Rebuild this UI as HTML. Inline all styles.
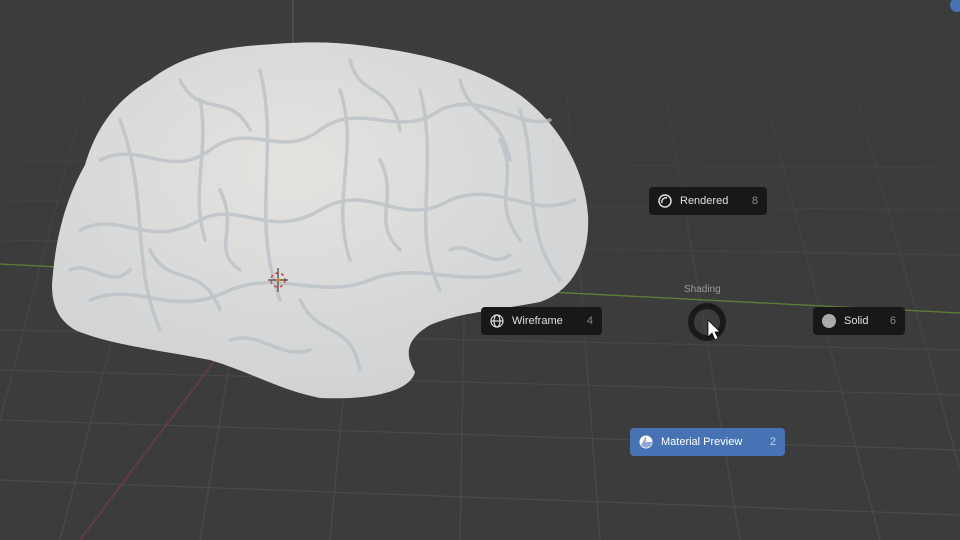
<!DOCTYPE html><html><head><style>
body{margin:0;width:960px;height:540px;overflow:hidden;background:#3c3c3c;font-family:"Liberation Sans",sans-serif}
.b{position:absolute;height:28px;background:#181818;border-radius:4px;color:#e0e0e0;font-size:11px;display:flex;align-items:center;box-sizing:border-box;padding:0 9px}
.b .k{margin-left:auto;color:#888}
.b svg{margin-right:8px}
</style></head><body>
<svg width="960" height="540" style="position:absolute;left:0;top:0">
<defs>
<linearGradient id="gf" x1="0" y1="0" x2="0" y2="1"><stop offset="0" stop-color="#fff" stop-opacity=".1"/><stop offset="1" stop-color="#fff" stop-opacity="1"/></linearGradient>
<mask id="m"><rect width="960" height="540" fill="url(#gf)"/></mask>
<radialGradient id="br" cx=".45" cy=".35" r=".7"><stop offset="0" stop-color="#e4e3e0"/><stop offset="1" stop-color="#cfd1d3"/></radialGradient>
</defs>
<g stroke="#4c4c4c" stroke-width="1.2" fill="none" mask="url(#m)">
<line x1="0" y1="330" x2="960" y2="350"/><line x1="0" y1="370" x2="960" y2="395"/><line x1="0" y1="420" x2="960" y2="450"/><line x1="0" y1="480" x2="960" y2="515"/>
<line x1="0" y1="240" x2="960" y2="255"/><line x1="0" y1="200" x2="960" y2="210"/><line x1="0" y1="160" x2="960" y2="168"/>
<line x1="380" y1="0" x2="330" y2="540"/><line x1="470" y1="0" x2="460" y2="540"/><line x1="560" y1="0" x2="600" y2="540"/><line x1="650" y1="0" x2="740" y2="540"/><line x1="740" y1="0" x2="880" y2="540"/><line x1="830" y1="0" x2="960" y2="470"/><line x1="200" y1="0" x2="60" y2="540"/><line x1="110" y1="0" x2="0" y2="420"/><line x1="290" y1="0" x2="200" y2="540"/>
</g>
<line x1="0" y1="264" x2="960" y2="313" stroke="#5f7f35" stroke-width="1.3"/>
<line x1="230" y1="340" x2="80" y2="540" stroke="#7a3a44" stroke-width="1.3"/>
<line x1="293" y1="0" x2="293" y2="260" stroke="#555d66" stroke-width="1"/>
<path d="M52 285 C55 240 65 200 85 165 C95 130 115 100 150 80 C175 60 210 48 260 45 C300 42 330 40 380 48 C430 55 480 68 520 95 C560 125 585 170 588 215 C590 255 575 290 540 302 C500 310 460 312 430 325 C405 340 405 355 415 372 C410 392 370 400 320 398 C280 390 250 372 210 360 C160 350 110 345 75 330 C55 318 52 300 52 285Z" fill="url(#br)"/>
<g stroke="#b9c0c6" stroke-width="3.5" fill="none" opacity=".75" stroke-linecap="round">
<path d="M100 160 C140 140 170 180 210 150 C250 120 280 160 320 130 C360 100 400 140 440 110 C480 90 520 130 550 120"/>
<path d="M80 230 C120 210 150 250 200 220 C240 200 270 240 320 210 C370 180 400 230 450 200 C500 180 530 220 575 200"/>
<path d="M90 300 C140 280 170 320 230 290 C280 270 320 300 370 280 C420 260 460 290 520 270"/>
<path d="M180 80 C200 120 230 90 250 130 M350 60 C360 100 390 80 400 130 M460 80 C470 120 500 110 510 160 M150 250 C170 290 200 260 220 310 M300 300 C320 340 350 320 360 370 M220 190 C240 230 210 250 240 270 M380 160 C400 200 370 220 400 250 M500 140 C520 180 490 200 520 240"/>
<path d="M120 120 C150 200 130 260 160 330 M260 70 C280 150 250 220 280 300 M420 90 C440 170 410 230 440 290 M520 110 C540 170 520 230 560 280 M340 90 C360 150 330 200 350 260 M200 100 C210 150 190 190 205 240"/>
<path d="M70 270 C90 260 110 290 130 270 M230 340 C260 330 280 360 310 350 M450 250 C470 240 490 270 510 255"/>
</g>
<circle cx="278" cy="280" r="7" fill="none" stroke="#c44" stroke-width="1.5" stroke-dasharray="3 3"/>
<line x1="268" y1="280" x2="288" y2="280" stroke="#222"/><line x1="278" y1="268" x2="278" y2="292" stroke="#222"/>
<circle cx="278" cy="280" r="1.8" fill="#e08020"/>
<circle cx="707" cy="322" r="16" fill="none" stroke="#1a1a1a" stroke-width="6"/>
<path d="M708 320 L708 337 L712 333 L715 340 L718 338 L715 332 L720 332 Z" fill="#fff" stroke="#000" stroke-width=".7"/>
<circle cx="957" cy="5" r="7" fill="#4772b3"/>
</svg>
<div style="position:absolute;left:684px;top:284px;font-size:10px;color:#999">Shading</div>
<div class="b" style="left:649px;top:187px;width:118px"><svg width="14" height="14"><circle cx="7" cy="7" r="6" fill="none" stroke="#ddd" stroke-width="1.5"/><path d="M4 9 A4 4 0 0 1 9 4" stroke="#ddd" stroke-width="1.5" fill="none"/></svg>Rendered<span class="k">8</span></div>
<div class="b" style="left:481px;top:307px;width:121px"><svg width="14" height="14" fill="none" stroke="#ddd" stroke-width="1.2"><circle cx="7" cy="7" r="6"/><ellipse cx="7" cy="7" rx="3" ry="6"/><line x1="1" y1="7" x2="13" y2="7"/></svg>Wireframe<span class="k">4</span></div>
<div class="b" style="left:813px;top:307px;width:92px"><svg width="14" height="14"><circle cx="7" cy="7" r="7" fill="#aaa"/></svg>Solid<span class="k">6</span></div>
<div class="b" style="left:630px;top:428px;width:155px;background:#4772b3;color:#fff"><svg width="14" height="14"><circle cx="7" cy="7" r="6.5" fill="#fff"/><path d="M7 1 V7 H13 A6 6 0 0 1 2 10 Z" fill="#4772b3" opacity=".6"/></svg>Material Preview<span class="k" style="color:#c8d4ea">2</span></div>
</body></html>
